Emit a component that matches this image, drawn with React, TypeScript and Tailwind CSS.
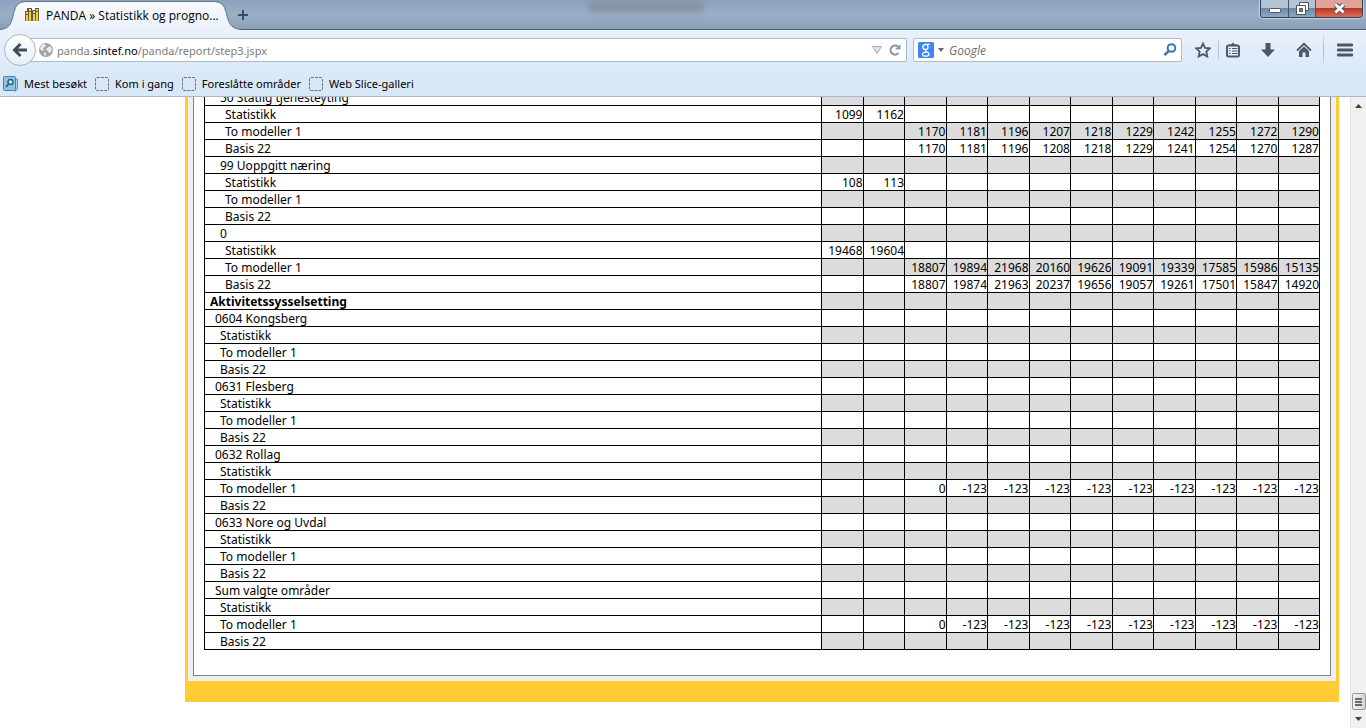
import { useState } from 'react';

type Row = {
  label: string;
  level: number;
  values?: string[];
  bold?: boolean;
};

const COLUMNS = 12;

const INDENT = ['pl-[5px]', 'pl-[10px]', 'pl-[15px]', 'pl-[20px]'];

const e = '';
const sysselsatt = ['0', '-123', '-123', '-123', '-123', '-123', '-123', '-123', '-123', '-123'];

// Report rows
const rows: Row[] = [
  { label: '50 Statlig tjenesteyting', level: 2 },
  { label: 'Statistikk', level: 3, values: ['1099', '1162'] },
  { label: 'To modeller 1', level: 3, values: [e, e, '1170', '1181', '1196', '1207', '1218', '1229', '1242', '1255', '1272', '1290'] },
  { label: 'Basis 22', level: 3, values: [e, e, '1170', '1181', '1196', '1208', '1218', '1229', '1241', '1254', '1270', '1287'] },
  { label: '99 Uoppgitt næring', level: 2 },
  { label: 'Statistikk', level: 3, values: ['108', '113'] },
  { label: 'To modeller 1', level: 3 },
  { label: 'Basis 22', level: 3 },
  { label: '0', level: 2 },
  { label: 'Statistikk', level: 3, values: ['19468', '19604'] },
  { label: 'To modeller 1', level: 3, values: [e, e, '18807', '19894', '21968', '20160', '19626', '19091', '19339', '17585', '15986', '15135'] },
  { label: 'Basis 22', level: 3, values: [e, e, '18807', '19874', '21963', '20237', '19656', '19057', '19261', '17501', '15847', '14920'] },
  { label: 'Aktivitetssysselsetting', level: 0, bold: true },
  { label: '0604 Kongsberg', level: 1 },
  { label: 'Statistikk', level: 2 },
  { label: 'To modeller 1', level: 2 },
  { label: 'Basis 22', level: 2 },
  { label: '0631 Flesberg', level: 1 },
  { label: 'Statistikk', level: 2 },
  { label: 'To modeller 1', level: 2 },
  { label: 'Basis 22', level: 2 },
  { label: '0632 Rollag', level: 1 },
  { label: 'Statistikk', level: 2 },
  { label: 'To modeller 1', level: 2, values: [e, e, ...sysselsatt] },
  { label: 'Basis 22', level: 2 },
  { label: '0633 Nore og Uvdal', level: 1 },
  { label: 'Statistikk', level: 2 },
  { label: 'To modeller 1', level: 2 },
  { label: 'Basis 22', level: 2 },
  { label: 'Sum valgte områder', level: 1 },
  { label: 'Statistikk', level: 2 },
  { label: 'To modeller 1', level: 2, values: [e, e, ...sysselsatt] },
  { label: 'Basis 22', level: 2 },
];

const bookmarks = ['Kom i gang', 'Foreslåtte områder', 'Web Slice-galleri'];

function TabStrip() {
  return (
    <div className="relative flex h-[30px] items-start border-b border-[#4a5f73] bg-linear-to-b from-[#8ba2bd] via-[#9bafc6] to-[#8a9fb5]">
      <div className="absolute top-0 left-[588px] h-3 w-[116px] rounded-b bg-[#8795a3] blur-[3px]" />
      <div className="relative -mb-px flex h-[30px] w-[232px] shrink-0 items-center">
        <svg className="absolute inset-0 h-[30px] w-[242px]" viewBox="0 0 242 30" aria-hidden="true">
          <defs>
            <linearGradient id="tab" x1="0" y1="0" x2="0" y2="1">
              <stop offset="0" stopColor="#f7fafd" />
              <stop offset="1" stopColor="#eaf1fb" />
            </linearGradient>
          </defs>
          <path
            d="M0 30 V29.5 C9 29 11 24 13 16 C15 7 17 2 26 2 H214 C223 2 225 7 227 16 C229 24 232 29 241 29.5 V30 Z"
            fill="url(#tab)"
          />
          <path
            d="M0 29.5 C9 29 11 24 13 16 C15 7 17 1.5 26 1.5 H214 C223 1.5 225 7 227 16 C229 24 232 29 241 29.5"
            fill="none"
            stroke="#5f7489"
          />
        </svg>
        <svg className="relative ml-6 shrink-0" width="16" height="16" viewBox="0 0 16 16" aria-hidden="true">
          <rect width="16" height="16" fill="#fff" />
          <rect x="1" y="1" width="14" height="13" fill="#5b5b58" />
          <path d="M2 14V8h2v6zM5 14V5h2v9zM9 14V7h2v7zM12 14V5h2v9z" fill="#fc3" />
          <path d="M2 5h2v2H2zM5 2h2v2H5zM9 4h2v2H9zM12 2h2v2h-2z" fill="#fc3" />
          <path d="M1 1h2v3H1zM8 1h3v2H8z" fill="#fff" />
        </svg>
        <span className="relative ml-[6px] pt-px text-[12px] leading-4 whitespace-nowrap text-black">PANDA » Statistikk og progno...</span>
      </div>
      <button type="button" aria-label="Ny fane" className="ml-1 flex h-[30px] w-[14px] items-center justify-center">
        <svg width="12" height="12" viewBox="0 0 12 12">
          <path d="M6 1v10M1 6h10" stroke="#3c4f61" strokeWidth="2" />
        </svg>
      </button>
      <div className="mr-[3px] ml-auto flex h-[18px] overflow-hidden rounded-b border border-t-0 border-[#2f4358] shadow-[0_0_1px_1px_#c5d3e0]">
        <button type="button" aria-label="Minimer" className="flex w-[28px] items-center justify-center border-r border-[#40556c] bg-linear-to-b from-[#b5c4d5] from-45% via-[#6f88a3] via-50% to-[#8fa9c4]">
          <svg width="12" height="12" viewBox="0 0 12 12">
            <rect x="0.5" y="5.5" width="11" height="4" rx="1" fill="#fff" stroke="#4b5564" />
          </svg>
        </button>
        <button type="button" aria-label="Gjenopprett" className="flex w-[27px] items-center justify-center border-r border-[#40556c] bg-linear-to-b from-[#b5c4d5] from-45% via-[#6f88a3] via-50% to-[#8fa9c4]">
          <svg width="13" height="13" viewBox="0 0 13 13">
            <path d="M3.5 0.5h9v8h-9z" fill="#fff" stroke="#4b5564" />
            <path d="M0.5 3.5h9v9h-9z" fill="#fff" stroke="#4b5564" />
            <path d="M3.5 6.5h3v3h-3z" fill="#6f88a3" stroke="#4b5564" />
          </svg>
        </button>
        <button type="button" aria-label="Lukk" className="flex w-[46px] items-center justify-center bg-linear-to-b from-[#dfa397] from-45% via-[#bd3421] via-50% to-[#d9705a]">
          <svg width="13" height="11" viewBox="0 0 13 11">
            <path d="M2.5 1.5l8 8M10.5 1.5l-8 8" stroke="#4b4f5c" strokeWidth="5" />
            <path d="M2.5 1.5l8 8M10.5 1.5l-8 8" stroke="#fff" strokeWidth="3" />
          </svg>
        </button>
      </div>
    </div>
  );
}

function Toolbar() {
  const [query, setQuery] = useState('');

  return (
    <div className="flex h-10 items-center pl-1">
      <button
        type="button"
        aria-label="Tilbake"
        className="z-10 flex size-8 shrink-0 items-center justify-center rounded-full border border-[#a5b5c8] bg-linear-to-b from-white to-[#e6eff9]"
      >
        <svg width="16" height="16" viewBox="0 0 16 16">
          <path d="M8.5 2L2.5 8l6 6M3 8h12" fill="none" stroke="#3e4d5a" strokeWidth="3" />
        </svg>
      </button>
      <div className="relative -ml-2 flex h-6 min-w-0 flex-1 items-center rounded-r-xs border border-[#a9bbd0] bg-white pr-1 pl-[10px]">
        <svg width="14" height="14" viewBox="0 0 14 14" className="shrink-0" aria-hidden="true">
          <circle cx="7" cy="7" r="7" fill="#a3a3a3" />
          <path d="M2 3l3-2 2 1-1 2-2 1 1 2-2 1-2-2zM8 5l3-2 2 3-1 3-2 1-1-2-2-1zM5 9l2 1 0 3-2-1z" fill="#ececec" />
        </svg>
        <span className="ml-1 pt-px font-['Noto_Sans',sans-serif] text-[11px] leading-4 whitespace-nowrap text-[#7c7c7c]">
          panda.<span className="text-black">sintef.no</span>/panda/report/step3.jspx
        </span>
        <input type="text" aria-label="Adresse" className="absolute inset-y-0 right-10 left-6 bg-transparent outline-none" />
        <button type="button" aria-label="Vis historikk" className="ml-auto">
          <svg width="10" height="8" viewBox="0 0 10 8">
            <path d="M0.5 0.5h9L5 7.5z" fill="#dfe3e8" stroke="#a4adb8" />
          </svg>
        </button>
        <button type="button" aria-label="Last inn på nytt" className="ml-[6px]">
          <svg width="14" height="14" viewBox="0 0 14 14">
            <path d="M10.5 10A4.5 4.5 0 1 1 10 3.6" fill="none" stroke="#8c99a8" strokeWidth="2.2" />
            <path d="M12.5 1v5.5H7z" fill="#8c99a8" />
          </svg>
        </button>
      </div>
      <form className="ml-[6px] flex h-6 w-[269px] shrink-0 items-center rounded-xs border border-[#a9bbd0] bg-white pr-1 pl-1">
        <button type="button" aria-label="Velg søkemotor" className="flex shrink-0 items-center">
          <svg width="16" height="16" viewBox="0 0 16 16">
            <rect width="16" height="16" rx="1.5" fill="#4285f4" />
            <path d="M11.8 2.4H8C6 2.4 4.900 3.500 4.900 5S6 7.500 7.500 7.500 10 6.500 10 5 9.200 2.600 8 2.400" fill="none" stroke="#fff" strokeWidth="1.300" />
            <path d="M7.800 7.500C7 8.300 7.300 9 8.500 9.600 10.500 10.600 11 11.200 11 12.200 11 13.500 9.700 14.200 7.700 14.200S4.500 13.500 4.500 12.200 6 10.300 8.500 10.200" fill="none" stroke="#fff" strokeWidth="1.300" />
          </svg>
          <svg width="6" height="4" viewBox="0 0 6 4" className="ml-1">
            <path d="M0 0h6L3 4z" fill="#666" />
          </svg>
        </button>
        <input
          type="text"
          aria-label="Søk"
          placeholder="Google"
          value={query}
          onChange={(ev) => setQuery(ev.target.value)}
          className="ml-[5px] min-w-0 flex-1 bg-transparent pt-[2px] text-[12px] leading-4 outline-none placeholder:text-[#6d6d6d] placeholder:italic"
        />
        <button type="button" aria-label="Utfør søk">
          <svg width="14" height="14" viewBox="0 0 14 14">
            <circle cx="8.5" cy="5" r="3.8" fill="none" stroke="#3a78b5" strokeWidth="2" />
            <path d="M5.8 7.8L1.5 12.2" stroke="#3a78b5" strokeWidth="2.6" />
          </svg>
        </button>
      </form>
      <div className="flex h-full w-[184px] shrink-0 items-center text-[#4a5966]">
        <button type="button" aria-label="Bokmerk denne siden" className="ml-[13px]">
          <svg width="16" height="16" viewBox="0 0 16 16">
            <path d="M8 1.5l2 4.4 4.8.5-3.5 3.2 1 4.9L8 12.1l-4.3 2.4 1-4.9L1.2 6.4 6 5.9z" fill="none" stroke="currentColor" strokeWidth="1.8" />
          </svg>
        </button>
        <span className="ml-[7px] h-[18px] w-px bg-[#b3c3d4]" />
        <button type="button" aria-label="Vis bokmerker" className="ml-[6px]">
          <svg width="16" height="16" viewBox="0 0 16 16">
            <rect x="2" y="3.5" width="12" height="11" rx="1.5" fill="none" stroke="currentColor" strokeWidth="2" />
            <path d="M4 4V2.5h2L8 .5l2 2h2V4z" fill="currentColor" />
            <path d="M4 6.500h1.500M7 6.500h5.500M4 9h1.500M7 9h5.500M4 11.500h1.500M7 11.500h5.500" stroke="currentColor" strokeWidth="1.200" />
          </svg>
        </button>
        <button type="button" aria-label="Nedlastinger" className="ml-5">
          <svg width="14" height="14" viewBox="0 0 14 14">
            <path d="M4.5 0h5v6.5H14L7 14 0 6.5h4.5z" fill="currentColor" />
          </svg>
        </button>
        <button type="button" aria-label="Startside" className="ml-[21px]">
          <svg width="16" height="16" viewBox="0 0 16 16">
            <path d="M1 8.5L8 1.8l7 6.7" fill="none" stroke="currentColor" strokeWidth="1.8" />
            <path d="M3 9l5-4.6L13 9v6H9.5v-4.5h-3V15H3z" fill="currentColor" />
          </svg>
        </button>
        <span className="ml-[11px] h-9 w-px bg-linear-to-b from-transparent via-[#a4b4c6] to-transparent" />
        <button type="button" aria-label="Åpne meny" className="ml-[13px]">
          <svg width="16" height="14" viewBox="0 0 16 14">
            <path d="M1 2h14M1 7h14M1 12h14" stroke="currentColor" strokeWidth="2.8" strokeLinecap="round" />
          </svg>
        </button>
      </div>
    </div>
  );
}

function BookmarksBar() {
  return (
    <div className="flex h-[26px] items-center gap-2 pt-[2px] pl-[3px] font-['Noto_Sans',sans-serif] text-[11px] leading-4 text-black">
      <button type="button" className="flex items-center gap-[6px] whitespace-nowrap">
        <svg width="15" height="16" viewBox="0 0 15 16">
          <path d="M10 3h4.5v10L12 15.5z" fill="#a8d3ec" stroke="#4f9bc8" />
          <rect x="0.5" y="0.5" width="12" height="14" rx="1" fill="#8fc3e2" stroke="#3f86b3" />
          <circle cx="7.5" cy="6" r="2.5" fill="#d6ebf7" stroke="#245f8a" strokeWidth="1.4" />
          <path d="M5.5 8L3 11" stroke="#245f8a" strokeWidth="1.8" />
        </svg>
        Mest besøkt
      </button>
      {bookmarks.map((b) => (
        <button key={b} type="button" className="flex items-center gap-[6px] whitespace-nowrap">
          <svg width="14" height="14" viewBox="0 0 14 14">
            <rect x="0.5" y="0.5" width="13" height="13" rx="1.5" fill="none" stroke="#6b737b" strokeDasharray="3 1" />
          </svg>
          {b}
        </button>
      ))}
    </div>
  );
}

function ReportTable() {
  return (
    <table className="w-full table-fixed border-collapse font-['Noto_Sans',sans-serif] text-[12px] leading-[14px] text-black">
      <colgroup>
        <col className="w-[617px]" />
        {Array.from({ length: COLUMNS }, (_, i) => (
          <col key={i} />
        ))}
      </colgroup>
      <tbody>
        {rows.map((row, i) => (
          <tr key={i} className="h-[17px]">
            <th
              scope="row"
              className={`border border-black p-0 pt-[2px] text-left ${INDENT[row.level]} ${row.bold ? 'font-bold' : 'font-normal'}`}
            >
              {row.label}
            </th>
            {Array.from({ length: COLUMNS }, (_, c) => (
              <td key={c} className={`border border-black p-0 pt-[2px] text-right ${i % 2 === 0 ? 'bg-[#dcdcdc]' : 'bg-white'}`}>
                {row.values?.[c]}
              </td>
            ))}
          </tr>
        ))}
      </tbody>
    </table>
  );
}

function Scrollbar() {
  return (
    <div className="flex w-4 shrink-0 flex-col items-center border-l border-[#e3e3e3] bg-[#f0f0f0]">
      <button type="button" aria-label="Rull opp" className="flex h-[17px] w-full items-center justify-center">
        <svg width="7" height="4" viewBox="0 0 7 4">
          <path d="M3.5 0L7 4H0z" fill="#404040" />
        </svg>
      </button>
      <div className="mt-auto flex h-[17px] w-[14px] flex-col items-center justify-center gap-px rounded-xs border border-[#979797] bg-linear-to-r from-[#f4f4f4] to-[#d3d3d6]">
        <span className="h-[2px] w-[7px] bg-[#6a6a6a]" />
        <span className="h-[2px] w-[7px] bg-[#6a6a6a]" />
        <span className="h-[2px] w-[7px] bg-[#6a6a6a]" />
      </div>
      <button type="button" aria-label="Rull ned" className="flex h-[18px] w-full items-center justify-center">
        <svg width="7" height="4" viewBox="0 0 7 4">
          <path d="M3.5 4L0 0h7z" fill="#404040" />
        </svg>
      </button>
    </div>
  );
}

export default function App() {
  return (
    <div className="flex h-screen flex-col overflow-hidden bg-white font-['Open_Sans',sans-serif]">
      <header className="shrink-0 border-b border-[#a5b9d1] bg-linear-to-b from-[#eaf1fb] from-30% to-[#d9e8f7] to-80%">
        <TabStrip />
        <Toolbar />
        <BookmarksBar />
      </header>
      <div className="flex min-h-0 flex-1">
        {/* scrolled to the end of the report */}
        <main className="flex min-w-0 flex-1 flex-col justify-end overflow-hidden pr-[11px] pb-[26px] pl-[185px]">
          <div className="bg-[#ffcc33] px-[3px] pb-[21px]">
            <div className="bg-[#eeeeee] px-[5px] pb-[5px]">
              <div className="border border-[#808080] bg-white px-[10px] pb-[25px]">
                <ReportTable />
              </div>
            </div>
          </div>
        </main>
        <Scrollbar />
      </div>
    </div>
  );
}
